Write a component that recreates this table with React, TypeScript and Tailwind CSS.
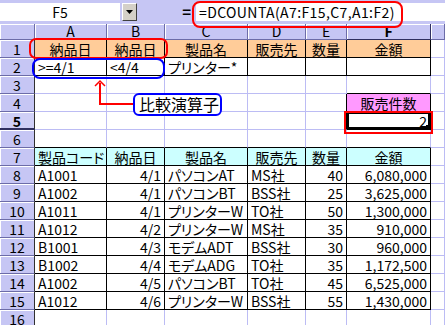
import React from "react";

type Cell = {
  t?: string;
  a?: "l" | "c" | "r";
  bg?: string;
  br?: boolean;
  bb?: boolean;
  active?: boolean;
};

const ORANGE = "bg-[#ffcc99]";
const CYAN = "bg-[#ccffff]";
const PINK = "bg-[#ff99ff]";

const tb = (t: string, a: "l" | "c" | "r" = "l", bg?: string): Cell => ({ t, a, bg, br: true, bb: true });

const dataRows: string[][] = [
  ["A1001", "4/1", "パソコンAT", "MS社", "40", "6,080,000"],
  ["A1002", "4/1", "パソコンBT", "BSS社", "25", "3,625,000"],
  ["A1011", "4/1", "プリンターW", "TO社", "50", "1,300,000"],
  ["A1012", "4/2", "プリンターW", "MS社", "35", "910,000"],
  ["B1001", "4/3", "モデムADT", "BSS社", "30", "960,000"],
  ["B1002", "4/4", "モデムADG", "TO社", "35", "1,172,500"],
  ["A1002", "4/5", "パソコンBT", "TO社", "45", "6,525,000"],
  ["A1012", "4/6", "プリンターW", "BSS社", "55", "1,430,000"],
];

const rows: Cell[][] = [
  [
    tb("納品日", "c", ORANGE),
    tb("納品日", "c", ORANGE),
    tb("製品名", "c", ORANGE),
    tb("販売先", "c", ORANGE),
    tb("数量", "c", ORANGE),
    tb("金額", "c", ORANGE),
    {},
  ],
  [tb(">=4/1"), tb("<4/4"), tb("プリンター*"), tb(""), tb(""), tb(""), {}],
  [{}, {}, {}, {}, {}, { bb: true }, {}],
  [{}, {}, {}, {}, { br: true }, tb("販売件数", "c", PINK), {}],
  [{}, {}, {}, {}, { br: true }, { ...tb("2", "r"), active: true }, {}],
  [{ bb: true }, { bb: true }, { bb: true }, { bb: true }, { bb: true }, { bb: true }, {}],
  [
    tb("製品コード", "c", CYAN),
    tb("納品日", "c", CYAN),
    tb("製品名", "c", CYAN),
    tb("販売先", "c", CYAN),
    tb("数量", "c", CYAN),
    tb("金額", "c", CYAN),
    {},
  ],
  ...dataRows.map((r) => [
    tb(r[0], "l"),
    tb(r[1], "r"),
    tb(r[2], "l"),
    tb(r[3], "l"),
    tb(r[4], "r"),
    tb(r[5], "r"),
    {},
  ]),
  [{}, {}, {}, {}, {}, {}, {}],
];

const colLetters = ["A", "B", "C", "D", "E", "F", ""];

function GridCell({ c }: { c: Cell }) {
  const align = c.a === "r" ? "text-right" : c.a === "c" ? "text-center" : "text-left";
  return (
    <div
      className={[
        "relative h-[18px] box-border border-r border-b overflow-hidden whitespace-nowrap leading-[15px] pt-[2px] px-[3px] text-[14px] text-black",
        c.br ? "border-r-black" : "border-r-[#bcbcf4]",
        c.bb ? "border-b-black" : "border-b-[#bcbcf4]",
        c.bg ?? "bg-white",
        align,
        c.active ? "shadow-[inset_0_0_0_2px_#000]" : "",
      ].join(" ")}
    >
      {c.t}
      {c.active && <div className="absolute right-0 bottom-0 w-[4px] h-[4px] bg-black" />}
    </div>
  );
}

export default function App() {
  return (
    <div className="relative w-[445px] h-[325px] overflow-hidden bg-white font-['Noto_Sans_CJK_JP','Noto_Sans',sans-serif] [font-feature-settings:'palt'] text-black">
      {/* Formula bar */}
      <div className="h-[24px] bg-[#c6c6f4] flex items-start pt-[3px]">
        <div className="w-[120px] h-[18px] bg-white text-center text-[14px] leading-[18px]">F5</div>
        <div className="ml-[2px] w-[15px] h-[18px] box-border bg-[#d4d0c8] border border-t-white border-l-white border-r-[#404040] border-b-[#404040] flex items-center justify-center">
          <svg width="7" height="4" viewBox="0 0 7 4">
            <path d="M0 0 H7 L3.5 4 Z" fill="#000" />
          </svg>
        </div>
        <div className="w-[59px] h-[18px] flex items-center justify-end pr-[5px] text-[15px] font-bold leading-[18px]">=</div>
        <div className="flex-1 h-[18px] bg-white pl-[3px] text-[14px] leading-[18px] tracking-[0.4px] whitespace-nowrap">
          =DCOUNTA(A7:F15,C7,A1:F2)
        </div>
      </div>

      {/* Sheet */}
      <div className="grid grid-cols-[35px_72px_58px_83px_58px_41px_84px_1fr]">
        <div className="h-[16px] box-border bg-[#c6c6f4] border-r border-b border-r-[#6c6ca8] border-b-[#6c6ca8] shadow-[inset_1px_1px_0_#fff]" />
        {colLetters.map((l, i) => (
          <div
            key={"h" + i}
            className={[
              "h-[16px] box-border bg-[#c6c6f4] border-r border-b border-r-[#6c6ca8] border-b-[#6c6ca8] text-center text-[14px] leading-[15px] shadow-[inset_1px_1px_0_#fff]",
              l === "F" ? "font-bold bg-[#c0c0ee] border-r-[#303060] border-b-[#303060]" : "",
            ].join(" ")}
          >
            {l}
          </div>
        ))}
        {rows.map((r, ri) => (
          <React.Fragment key={"r" + ri}>
            <div
              className={[
                "h-[18px] box-border border-r border-b border-r-[#303030] text-center text-[14px] pt-[2px] shadow-[inset_1px_1px_0_#fff] overflow-hidden",
                ri === 4
                  ? "font-bold bg-[#cfcff6] border-b-[#303060] border-b-2 leading-[14px]"
                  : "bg-[#c6c6f4] border-b-[#6c6ca8] leading-[15px]",
              ].join(" ")}
            >
              {ri + 1}
            </div>
            {r.map((c, ci) => (
              <GridCell key={ci} c={c} />
            ))}
          </React.Fragment>
        ))}
      </div>

      {/* Annotations */}
      <div className="absolute left-[192px] top-[1px] w-[211px] h-[27px] border-2 border-[#ff0000] rounded-[8px]" />
      <div className="absolute left-[29px] top-[38px] w-[139px] h-[21px] border-2 border-[#ff0000] rounded-[7px]" />
      <div className="absolute left-[32px] top-[58px] w-[133px] h-[21px] border-2 border-[#0000ff] rounded-[8px]" />
      <svg className="absolute left-0 top-0" width="445" height="325" viewBox="0 0 445 325">
        <path d="M100 83 V104 H134" fill="none" stroke="#ff0000" strokeWidth="2" />
        <path d="M95 86 L100 81 L105 86" fill="none" stroke="#ff0000" strokeWidth="1.5" />
      </svg>
      <div className="absolute left-[133px] top-[93px] w-[89px] h-[23px] box-border border-2 border-[#0000ff] rounded-[6px] bg-white text-[16px] leading-[19px] pl-[4px] whitespace-nowrap">
        比較演算子
      </div>
      <div className="absolute left-[344px] top-[111px] w-[89px] h-[23px] box-border border-2 border-[#ff0000]" />
    </div>
  );
}
